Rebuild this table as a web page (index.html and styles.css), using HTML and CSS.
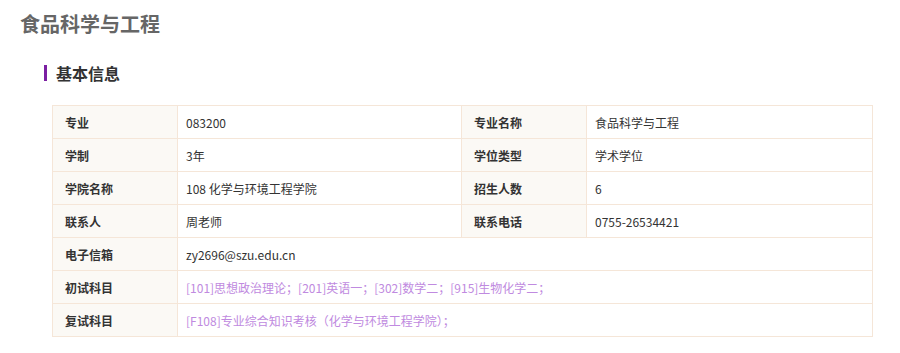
FILE: index.html
```html
<!DOCTYPE html>
<html lang="zh">
<head>
<meta charset="utf-8">
<link rel="stylesheet" href="styles.css">
</head>
<body>
<div class="page">
  <h1 class="title">食品科学与工程</h1>
  <h2 class="section">基本信息</h2>
  <table class="info">
    <colgroup>
      <col class="c1"><col class="c2"><col class="c3"><col class="c4">
    </colgroup>
    <tr><th>专业</th><td>083200</td><th>专业名称</th><td>食品科学与工程</td></tr>
    <tr><th>学制</th><td>3年</td><th>学位类型</th><td>学术学位</td></tr>
    <tr><th>学院名称</th><td>108 化学与环境工程学院</td><th>招生人数</th><td>6</td></tr>
    <tr><th>联系人</th><td>周老师</td><th>联系电话</th><td>0755-26534421</td></tr>
    <tr><th>电子信箱</th><td colspan="3">zy2696@szu.edu.cn</td></tr>
    <tr><th>初试科目</th><td colspan="3" class="link">[101]思想政治理论；[201]英语一；[302]数学二；[915]生物化学二；</td></tr>
    <tr><th>复试科目</th><td colspan="3" class="link">[F108]专业综合知识考核（化学与环境工程学院）；</td></tr>
  </table>
</div>
</body>
</html>
```

FILE: styles.css
```css
html, body {
  margin: 0;
  padding: 0;
  background: #fff;
  font-family: "Microsoft YaHei", "Noto Sans CJK SC", sans-serif;
}
.page {
  padding: 10px 20px 0 20px;
}
.title {
  margin: 0;
  font-size: 20px;
  line-height: 28px;
  font-weight: bold;
  color: #666;
}
.section {
  margin: 27px 0 0 24px;
  padding-left: 9px;
  border-left: 3px solid #7b1fa2;
  font-size: 16px;
  line-height: 16px;
  font-weight: bold;
  color: #333;
}
.info {
  margin: 24px 0 0 32px;
  width: 820px;
  border-collapse: collapse;
  table-layout: fixed;
  font-size: 12px;
  color: #333;
}
.c1 { width: 125px; }
.c2 { width: 284px; }
.c3 { width: 125px; }
.c4 { width: 286px; }
.info th, .info td {
  border: 1px solid #f5e6d8;
  height: 33px;
  padding: 0 0 0 8px;
  text-align: left;
  vertical-align: middle;
  box-sizing: border-box;
}
.info th {
  padding-left: 12px;
  background: #fbf9f5;
  font-weight: bold;
}
.info td.link {
  color: #c08ae0;
}
```
